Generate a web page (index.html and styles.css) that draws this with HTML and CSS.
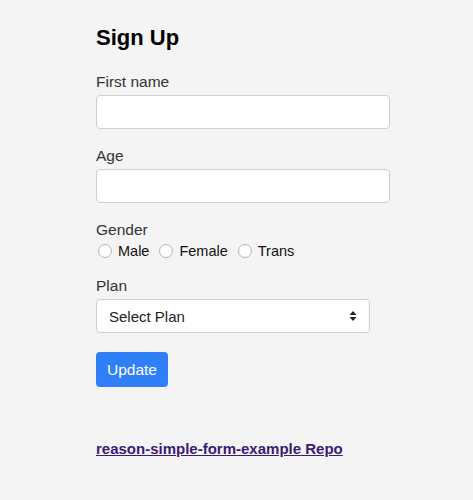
FILE: index.html
```html
<!DOCTYPE html>
<html>
<head>
<meta charset="utf-8">
<link rel="stylesheet" href="styles.css">
</head>
<body>
<div class="page">
  <h1 class="title">Sign Up</h1>
  <div class="field">
    <label class="label">First name</label>
    <input class="input" type="text">
  </div>
  <div class="field">
    <label class="label">Age</label>
    <input class="input" type="text">
  </div>
  <div class="field field-radios">
    <label class="label">Gender</label>
    <div class="radios">
      <label class="radio"><span class="circle"></span>Male</label>
      <label class="radio"><span class="circle"></span>Female</label>
      <label class="radio"><span class="circle"></span>Trans</label>
    </div>
  </div>
  <div class="field">
    <label class="label">Plan</label>
    <div class="select">
      <span>Select Plan</span>
      <svg class="arrows" width="8" height="12" viewBox="0 0 8 12"><path d="M4 1 L7.5 5 H0.5 Z M4 11 L7.5 7 H0.5 Z" fill="#222"/></svg>
    </div>
  </div>
  <button class="btn">Update</button>
  <a class="repo" href="#">reason-simple-form-example Repo</a>
</div>
</body>
</html>
```
FILE: styles.css
```css
html, body {
  margin: 0;
  background: #f4f4f4;
}
body {
  font-family: "Liberation Sans", Arial, sans-serif;
  color: #222;
}
.page {
  width: 294px;
  padding: 24px 0 0 96px;
  display: flex;
  flex-direction: column;
}
.title {
  margin: 0 0 20px;
  font-size: 22px;
  font-weight: bold;
  color: #000;
  line-height: 28px;
}
.field {
  display: flex;
  flex-direction: column;
  margin-bottom: 17px;
}
.field-radios {
  margin-bottom: 15px;
}
.label {
  font-size: 15.5px;
  line-height: 20px;
  margin-bottom: 3px;
  color: #333;
}
.input {
  box-sizing: border-box;
  height: 34px;
  width: 294px;
  border: 1px solid #cfcfcf;
  border-radius: 4px;
  background: #fff;
  margin: 0;
}
.radios {
  display: flex;
  gap: 8px;
  margin-top: -2px;
}
.radio {
  display: flex;
  align-items: center;
  font-size: 14.5px;
  color: #111;
  line-height: 20px;
}
.circle {
  width: 12px;
  height: 12px;
  border: 1px solid #b5b5b5;
  border-radius: 50%;
  background: #fff;
  margin: 0 6px 0 2px;
}
.select {
  box-sizing: border-box;
  width: 274px;
  height: 34px;
  border: 1px solid #cfcfcf;
  border-radius: 4px;
  background: #fff;
  display: flex;
  align-items: center;
  justify-content: space-between;
  padding: 0 12px 0 12px;
  font-size: 15px;
  color: #222;
}
.btn {
  align-self: flex-start;
  margin-top: 2px;
  width: 72px;
  height: 35px;
  border: none;
  border-radius: 4px;
  background: #2f80f7;
  color: #fff;
  font-family: inherit;
  font-size: 15.5px;
}
.repo {
  margin-top: 53px;
  align-self: flex-start;
  font-size: 15px;
  font-weight: bold;
  color: #3b1a74;
}
```
